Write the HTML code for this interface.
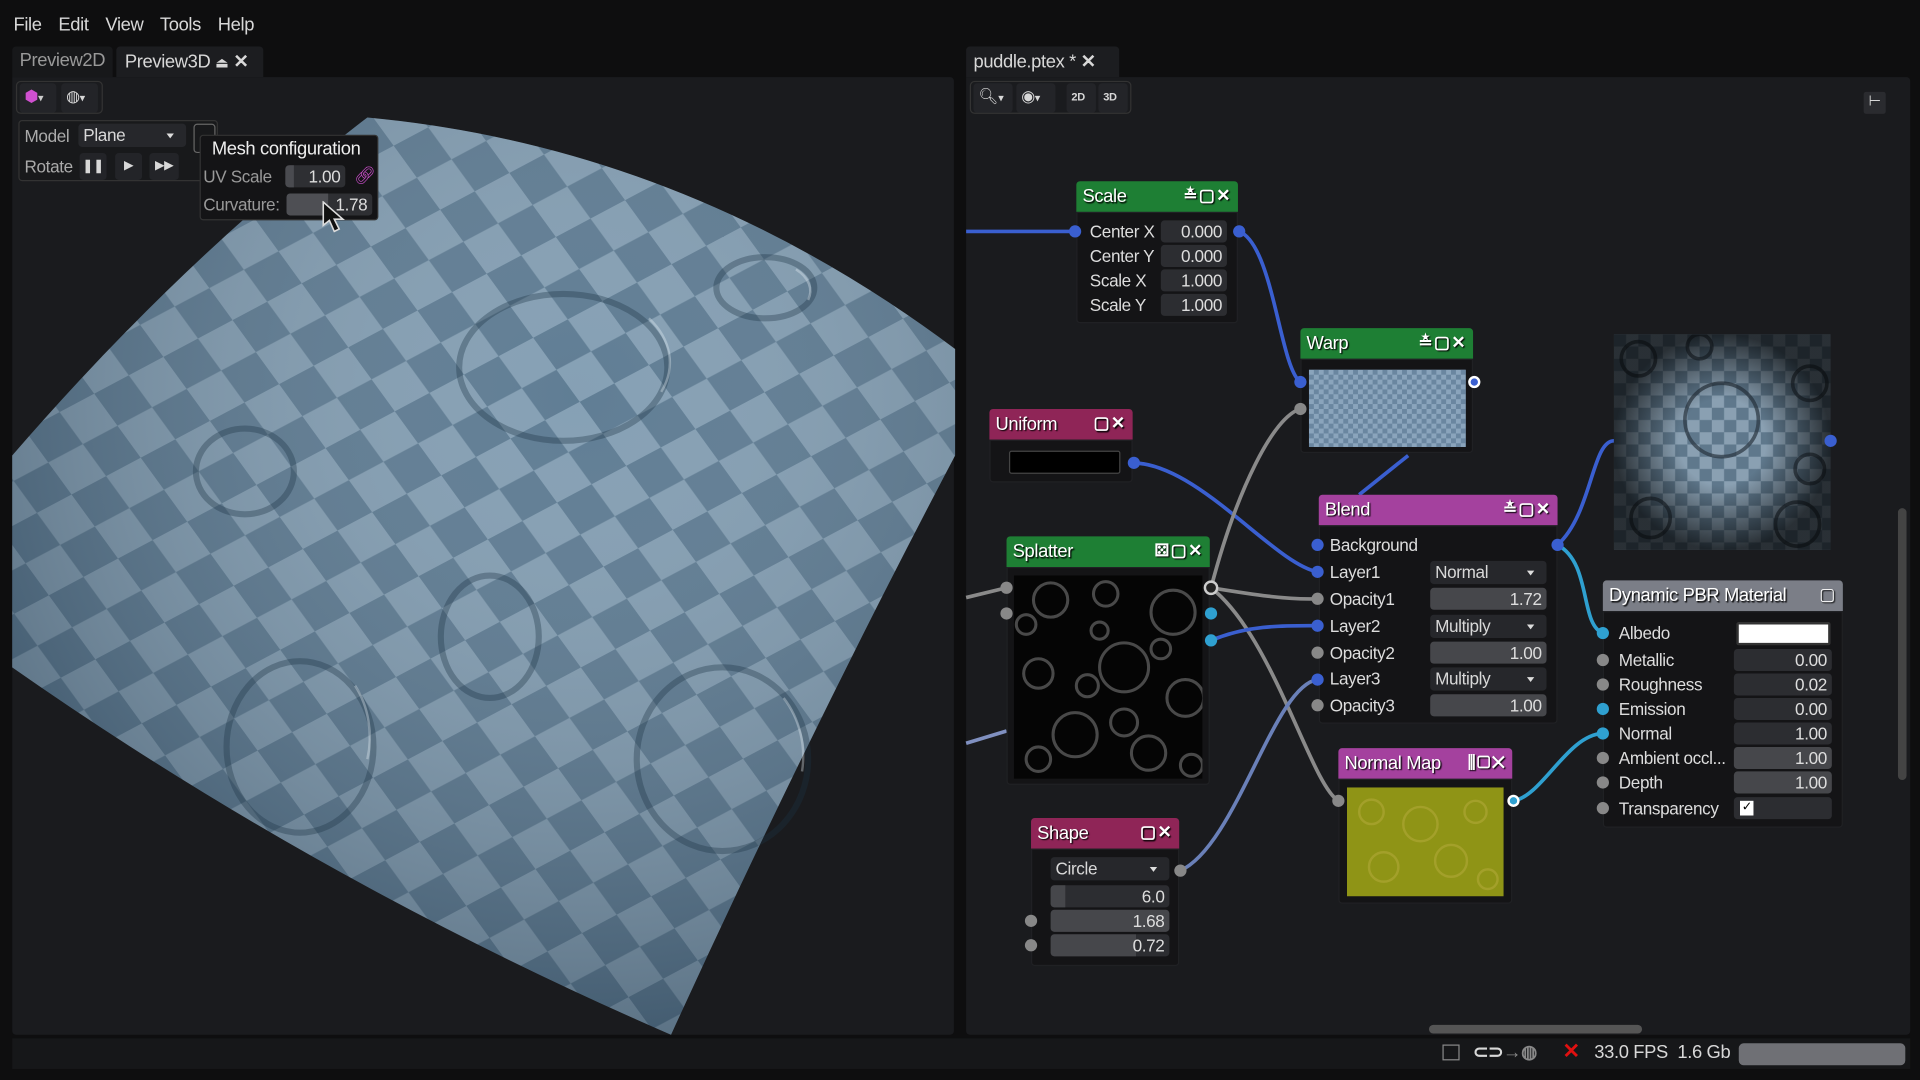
<!DOCTYPE html>
<html><head><meta charset="utf-8"><style>
*{box-sizing:border-box;margin:0;padding:0}
html,body{width:1920px;height:1080px;overflow:hidden;background:#0e0e0f}
#w{position:absolute;left:0;top:0;width:1568px;height:882px;transform:scale(1.22449);transform-origin:0 0;font-family:"Liberation Sans",sans-serif;color:#d8d8d8;font-size:14px;letter-spacing:-0.3px}
.a{position:absolute}
.pan{background:#1a1b1e}
.hd{position:absolute;height:25px;color:#fff;font-size:15px;padding:4px 5px;text-shadow:1px 1px 1px #000;border-radius:3px 3px 0 0}
.bd{position:absolute;background:#141416;border:1px solid #202124;border-radius:0 0 3px 3px}
.ic{position:absolute;right:5px;top:3px;font-size:14px;font-weight:bold;letter-spacing:1px}
.lb{position:absolute;font-size:14px;color:#ddd}
.vb{position:absolute;background:#2c2d31;border-radius:3px;text-align:right;padding-right:4px;font-size:14px;color:#ddd;height:18px;line-height:18px}
.dd{position:absolute;background:#26272b;border-radius:3px;padding-left:4px;font-size:14px;height:19px;line-height:19px}
.dd:after{content:"";position:absolute;right:10px;top:8px;border:3px solid transparent;border-top:4px solid #ddd}
.dt{position:absolute;width:10px;height:10px;border-radius:50%}
.tb{position:absolute;background:#232428;border-radius:3px;height:24px}
</style></head><body><div id="w">
<div class="a" style="left:11px;top:12px;font-size:15px;word-spacing:3px">File&nbsp; Edit&nbsp; View&nbsp; Tools&nbsp; Help</div>
<div class="a" style="left:10px;top:38px;width:82px;height:25px;background:#17181a;border-radius:3px 3px 0 0;color:#999;font-size:15px;padding:3px 6px">Preview2D</div>
<div class="a" style="left:95px;top:38px;width:120px;height:25px;background:#1c1d20;border-radius:3px 3px 0 0;font-size:15px;padding:3px 7px">Preview3D <span style="font-size:12px">⏏</span> <b>✕</b></div>
<div class="a" style="left:789px;top:38px;width:125px;height:25px;background:#1c1d20;border-radius:3px 3px 0 0;font-size:15px;padding:3px 6px">puddle.ptex * <b>✕</b></div>
<div class="a pan" style="left:10px;top:63px;width:769px;height:782px;border-radius:0 3px 3px 3px"></div>
<div class="a pan" style="left:789px;top:63px;width:771px;height:782px;border-radius:0 3px 3px 3px"></div>
<div class="a" style="left:10px;top:848px;width:1550px;height:25px;background:#161719"></div>
<svg class="a" style="left:0;top:0" width="790" height="850">
<defs>
<pattern id="ck" width="64" height="64" patternUnits="userSpaceOnUse" patternTransform="rotate(-28) skewX(8)">
<rect width="64" height="64" fill="#7b98ae"/><rect width="32" height="32" fill="#52728b"/><rect x="32" y="32" width="32" height="32" fill="#52728b"/></pattern>
<radialGradient id="sh" cx="0.6" cy="0.3" r="0.85"><stop offset="0" stop-color="#fff" stop-opacity="0.08"/><stop offset="1" stop-color="#001020" stop-opacity="0.45"/></radialGradient>
</defs>
<path d="M300,96 Q560,120 780,285 L780,372 Q660,600 548,845 Q260,720 10,545 L10,372 Q150,210 300,96Z" fill="url(#ck)"/>
<path d="M300,96 Q560,120 780,285 L780,372 Q660,600 548,845 Q260,720 10,545 L10,372 Q150,210 300,96Z" fill="url(#sh)"/>
<g fill="none" stroke="#1e3344" stroke-opacity="0.35" stroke-width="5">
<ellipse cx="460" cy="300" rx="85" ry="60"/><ellipse cx="625" cy="235" rx="40" ry="25"/><ellipse cx="245" cy="610" rx="60" ry="70"/><ellipse cx="590" cy="620" rx="70" ry="75"/><ellipse cx="200" cy="385" rx="40" ry="35"/><ellipse cx="400" cy="520" rx="40" ry="50"/>
</g>
<g fill="none" stroke="#e8f0f6" stroke-opacity="0.35" stroke-width="2">
<path d="M530,260 A85,60 0 0 1 540,320"/><path d="M650,220 A40,25 0 0 1 660,245"/><path d="M290,560 A60,70 0 0 1 300,620"/><path d="M640,570 A70,75 0 0 1 655,630"/>
</g>
</svg>
<div class="a" style="left:13px;top:66px;width:71px;height:27px;border:1px solid #333;border-radius:4px;background:#1b1c1f"></div>
<div class="tb" style="left:16px;top:68px;width:30px;color:#d050d0;font-size:13px;padding:3px 4px">⬢<span style="color:#ccc;font-size:9px">▾</span></div>
<div class="tb" style="left:50px;top:68px;width:30px;font-size:13px;padding:3px 4px">◍<span style="font-size:9px">▾</span></div>
<div class="a" style="left:15px;top:98px;width:163px;height:50px;border:1px solid #333;border-radius:3px;background:#18191b"></div>
<div class="lb" style="left:20px;top:103px;color:#aaa">Model</div>
<div class="dd" style="left:64px;top:101px;width:88px">Plane</div>
<div class="a" style="left:158px;top:101px;width:18px;height:24px;border:1px solid #666;border-radius:3px"></div>
<div class="lb" style="left:20px;top:128px;color:#aaa">Rotate</div>
<div class="tb" style="left:65px;top:125px;width:22px;height:22px;text-align:center;font-size:11px;line-height:22px">❚❚</div>
<div class="tb" style="left:94px;top:125px;width:22px;height:22px;text-align:center;font-size:10px;line-height:22px">▶</div>
<div class="tb" style="left:122px;top:125px;width:24px;height:22px;text-align:center;font-size:10px;line-height:22px">▶▶</div>
<div class="a" style="left:163px;top:110px;width:146px;height:70px;background:#141416;border:1px solid #333;border-radius:3px"></div>
<div class="lb" style="left:173px;top:113px;font-size:15px;color:#eee">Mesh configuration</div>
<div class="lb" style="left:166px;top:136px;color:#999">UV Scale</div>
<div class="vb" style="left:234px;top:135px;width:48px;background:#2e2f33">1.00</div>
<div class="a" style="left:233px;top:135px;width:7px;height:18px;background:#4a4b50;border-radius:3px 0 0 3px"></div>
<div class="lb" style="left:289px;top:135px;color:#d050d0">🔗︎</div>
<div class="lb" style="left:166px;top:159px;color:#999">Curvature:</div>
<div class="vb" style="left:234px;top:158px;width:70px;background:#2e2f33">1.78</div>
<div class="a" style="left:234px;top:158px;width:34px;height:18px;background:#4e4f54;border-radius:3px 0 0 3px"></div>
<svg class="a" style="left:262px;top:164px" width="22" height="28"><path d="M2,1 L2,20 L7,16 L11,25 L15,23 L11,15 L18,15Z" fill="#111" stroke="#ddd" stroke-width="1.3"/></svg>
<div class="a" style="left:792px;top:66px;width:132px;height:27px;border:1px solid #333;border-radius:4px"></div>
<div class="tb" style="left:795px;top:68px;width:32px;font-size:13px;padding:3px 4px">🔍︎<span style="font-size:9px">▾</span></div>
<div class="tb" style="left:830px;top:68px;width:32px;font-size:13px;padding:3px 4px">◉<span style="font-size:9px">▾</span></div>
<div class="tb" style="left:871px;top:68px;width:24px;font-size:9px;font-weight:bold;padding:6px 4px">2D</div>
<div class="tb" style="left:897px;top:68px;width:24px;font-size:9px;font-weight:bold;padding:6px 4px">3D</div>
<div class="a" style="left:1522px;top:75px;width:18px;height:18px;background:#2a2b2f;border-radius:2px;font-size:12px;text-align:center">⊢</div>
<svg class="a" style="left:0;top:0" width="1568" height="882" fill="none" stroke-width="3">
<path d="M789,189 L878,189" stroke="#3a5fd0"/>
<path d="M1012,189 C1040,200 1045,300 1062,312" stroke="#3a5fd0"/>
<path d="M926,378 C980,380 1040,460 1076,467" stroke="#3a5fd0"/>
<path d="M1150,372 L1110,404" stroke="#3a5fd0"/>
<path d="M1272,445 C1300,420 1300,360 1318,360" stroke="#3a5fd0"/>
<path d="M1272,445 C1300,460 1290,510 1309,517" stroke="#2fa0d0"/>
<path d="M989,480 C1010,400 1040,340 1062,334" stroke="#8a8a8a"/>
<path d="M989,480 C1020,485 1050,490 1076,489" stroke="#8a8a8a"/>
<path d="M989,480 C1040,520 1070,640 1093,654" stroke="#8a8a8a"/>
<path d="M989,523 C1020,510 1050,511 1076,511" stroke="#3a5fd0"/>
<path d="M964,711 C1010,690 1040,560 1076,555" stroke="#6a80b8"/>
<path d="M1236,654 C1260,650 1280,600 1309,599" stroke="#2fa0d0"/>
<path d="M789,488 L822,480" stroke="#8a8a8a"/>
<path d="M789,607 L822,597" stroke="#8090c0"/>
</svg>
<div class="hd" style="left:879px;top:148px;width:132px;background:#1e7f34">Scale<span class="ic">≛▢✕</span></div>
<div class="bd" style="left:879px;top:173px;width:132px;height:91px"></div>
<div class="lb" style="left:890px;top:181px">Center X</div><div class="vb" style="left:948px;top:180px;width:54px">0.000</div>
<div class="lb" style="left:890px;top:201px">Center Y</div><div class="vb" style="left:948px;top:200px;width:54px">0.000</div>
<div class="lb" style="left:890px;top:221px">Scale X</div><div class="vb" style="left:948px;top:220px;width:54px">1.000</div>
<div class="lb" style="left:890px;top:241px">Scale Y</div><div class="vb" style="left:948px;top:240px;width:54px">1.000</div>
<div class="dt" style="left:873px;top:184px;background:#3a5fd0"></div><div class="dt" style="left:1007px;top:184px;background:#3a5fd0"></div>
<div class="hd" style="left:1062px;top:268px;width:141px;background:#1e7f34">Warp<span class="ic">≛▢✕</span></div>
<div class="bd" style="left:1062px;top:293px;width:141px;height:77px"></div>
<div class="a" style="left:1069px;top:302px;width:128px;height:63px;background:#7c98b2;background-image:repeating-conic-gradient(#6a86a0 0 25%,#8aa4bc 0 50%);background-size:8px 8px"></div>
<div class="dt" style="left:1057px;top:307px;background:#3a5fd0"></div><div class="dt" style="left:1057px;top:329px;background:#888"></div><div class="dt" style="left:1199px;top:307px;background:#3a5fd0;border:2px solid #fff"></div>
<div class="hd" style="left:808px;top:334px;width:117px;background:#8f2557">Uniform<span class="ic">▢✕</span></div>
<div class="bd" style="left:808px;top:359px;width:117px;height:35px"></div>
<div class="a" style="left:824px;top:368px;width:91px;height:19px;background:#000;border:1px solid #444;border-radius:2px"></div>
<div class="dt" style="left:921px;top:373px;background:#3a5fd0"></div>
<div class="hd" style="left:1077px;top:404px;width:195px;background:#a4419e">Blend<span class="ic">≛▢✕</span></div>
<div class="bd" style="left:1077px;top:429px;width:195px;height:162px"></div>
<div class="lb" style="left:1086px;top:437px">Background</div>
<div class="lb" style="left:1086px;top:459px">Layer1</div><div class="dd" style="left:1168px;top:458px;width:95px">Normal</div>
<div class="lb" style="left:1086px;top:481px">Opacity1</div><div class="vb" style="left:1168px;top:480px;width:95px;background:#46474b">1.72</div>
<div class="lb" style="left:1086px;top:503px">Layer2</div><div class="dd" style="left:1168px;top:502px;width:95px">Multiply</div>
<div class="lb" style="left:1086px;top:525px">Opacity2</div><div class="vb" style="left:1168px;top:524px;width:95px;background:#46474b">1.00</div>
<div class="lb" style="left:1086px;top:546px">Layer3</div><div class="dd" style="left:1168px;top:545px;width:95px">Multiply</div>
<div class="lb" style="left:1086px;top:568px">Opacity3</div><div class="vb" style="left:1168px;top:567px;width:95px;background:#46474b">1.00</div>
<div class="dt" style="left:1071px;top:440px;background:#3a5fd0"></div><div class="dt" style="left:1071px;top:462px;background:#3a5fd0"></div><div class="dt" style="left:1071px;top:484px;background:#888"></div><div class="dt" style="left:1071px;top:506px;background:#3a5fd0"></div><div class="dt" style="left:1071px;top:528px;background:#888"></div><div class="dt" style="left:1071px;top:550px;background:#3a5fd0"></div><div class="dt" style="left:1071px;top:571px;background:#888"></div><div class="dt" style="left:1267px;top:440px;background:#3a5fd0"></div>
<div class="hd" style="left:822px;top:438px;width:166px;background:#1e7f34">Splatter<span class="ic">⚄▢✕</span></div>
<div class="bd" style="left:822px;top:463px;width:166px;height:178px"></div>
<svg class="a" style="left:828px;top:470px" width="154" height="166"><rect width="154" height="166" fill="#050505"/><g fill="none" stroke="#666" stroke-width="2.5" stroke-opacity="0.7"><circle cx="30" cy="20" r="14"/><circle cx="75" cy="15" r="10"/><circle cx="130" cy="30" r="18"/><circle cx="20" cy="80" r="12"/><circle cx="90" cy="75" r="20"/><circle cx="140" cy="100" r="15"/><circle cx="50" cy="130" r="18"/><circle cx="110" cy="145" r="14"/><circle cx="70" cy="45" r="7"/><circle cx="20" cy="150" r="10"/><circle cx="60" cy="90" r="9"/><circle cx="120" cy="60" r="8"/><circle cx="90" cy="120" r="11"/><circle cx="145" cy="155" r="9"/><circle cx="10" cy="40" r="8"/></g></svg>
<div class="dt" style="left:817px;top:475px;background:#888"></div><div class="dt" style="left:817px;top:496px;background:#888"></div>
<div class="dt" style="left:983px;top:474px;background:#222;border:2px solid #ccc;width:12px;height:12px"></div><div class="dt" style="left:984px;top:496px;background:#2fa0d0"></div><div class="dt" style="left:984px;top:518px;background:#2fa0d0"></div>
<div class="hd" style="left:842px;top:668px;width:121px;background:#8f2557">Shape<span class="ic">▢✕</span></div>
<div class="bd" style="left:842px;top:693px;width:121px;height:96px"></div>
<div class="dd" style="left:858px;top:700px;width:97px">Circle</div>
<div class="vb" style="left:858px;top:723px;width:97px">6.0</div><div class="a" style="left:858px;top:723px;width:12px;height:18px;background:#46474b;border-radius:3px 0 0 3px"></div>
<div class="vb" style="left:858px;top:743px;width:97px;background:#46474b">1.68</div>
<div class="vb" style="left:858px;top:763px;width:97px;background:linear-gradient(90deg,#46474b 72%,#2c2d31 72%)">0.72</div>
<div class="dt" style="left:959px;top:706px;background:#888"></div><div class="dt" style="left:837px;top:747px;background:#888"></div><div class="dt" style="left:837px;top:767px;background:#888"></div>
<div class="hd" style="left:1093px;top:611px;width:142px;background:#a4419e">Normal Map<span class="ic">⫼▢✕</span></div>
<div class="bd" style="left:1093px;top:636px;width:142px;height:102px"></div>
<svg class="a" style="left:1100px;top:643px" width="128" height="89"><rect width="128" height="89" fill="#8f9416"/><g fill="none" stroke="#b0a838" stroke-width="2" stroke-opacity="0.6"><circle cx="20" cy="20" r="10"/><circle cx="60" cy="30" r="14"/><circle cx="105" cy="20" r="9"/><circle cx="30" cy="65" r="12"/><circle cx="85" cy="60" r="13"/><circle cx="115" cy="75" r="8"/></g></svg>
<div class="dt" style="left:1088px;top:649px;background:#888"></div><div class="dt" style="left:1231px;top:649px;background:#2fa0d0;border:2px solid #fff"></div>
<svg class="a" style="left:1318px;top:273px" width="177" height="176"><defs><pattern id="c2" width="20" height="20" patternUnits="userSpaceOnUse"><rect width="20" height="20" fill="#8aa0b2"/><rect width="10" height="10" fill="#5f788c"/><rect x="10" y="10" width="10" height="10" fill="#5f788c"/></pattern><radialGradient id="v"><stop offset="0.4" stop-color="#000" stop-opacity="0"/><stop offset="1" stop-color="#000" stop-opacity="0.7"/></radialGradient></defs><rect width="177" height="176" fill="url(#c2)"/><g fill="none" stroke="#2a3440" stroke-width="3" stroke-opacity="0.7"><circle cx="88" cy="70" r="30"/><circle cx="20" cy="20" r="14"/><circle cx="160" cy="40" r="14"/><circle cx="30" cy="150" r="16"/><circle cx="150" cy="155" r="18"/><circle cx="160" cy="110" r="12"/><circle cx="70" cy="10" r="10"/></g><rect width="177" height="176" fill="url(#v)"/></svg>
<div class="dt" style="left:1490px;top:355px;background:#3a5fd0"></div>
<div class="hd" style="left:1309px;top:474px;width:196px;background:#7b7e87">Dynamic PBR Material<span class="ic" style="font-weight:normal">▢</span></div>
<div class="bd" style="left:1309px;top:499px;width:196px;height:177px"></div>
<div class="lb" style="left:1322px;top:509px">Albedo</div><div class="a" style="left:1418px;top:508px;width:77px;height:19px;background:#fff;border:2px solid #333;border-radius:2px"></div>
<div class="lb" style="left:1322px;top:531px">Metallic</div><div class="vb" style="left:1416px;top:530px;width:80px">0.00</div>
<div class="lb" style="left:1322px;top:551px">Roughness</div><div class="vb" style="left:1416px;top:550px;width:80px">0.02</div>
<div class="lb" style="left:1322px;top:571px">Emission</div><div class="vb" style="left:1416px;top:570px;width:80px">0.00</div>
<div class="lb" style="left:1322px;top:591px">Normal</div><div class="vb" style="left:1416px;top:590px;width:80px">1.00</div>
<div class="lb" style="left:1322px;top:611px">Ambient occl...</div><div class="vb" style="left:1416px;top:610px;width:80px;background:#46474b">1.00</div>
<div class="lb" style="left:1322px;top:631px">Depth</div><div class="vb" style="left:1416px;top:630px;width:80px;background:#46474b">1.00</div>
<div class="lb" style="left:1322px;top:652px">Transparency</div><div class="vb" style="left:1416px;top:651px;width:80px"></div><div class="a" style="left:1421px;top:654px;width:11px;height:12px;background:#fff;color:#000;font-size:10px;line-height:12px;text-align:center">✓</div>
<div class="dt" style="left:1304px;top:512px;background:#2fa0d0"></div><div class="dt" style="left:1304px;top:534px;background:#888"></div><div class="dt" style="left:1304px;top:554px;background:#888"></div><div class="dt" style="left:1304px;top:574px;background:#2fa0d0"></div><div class="dt" style="left:1304px;top:594px;background:#2fa0d0"></div><div class="dt" style="left:1304px;top:614px;background:#888"></div><div class="dt" style="left:1304px;top:634px;background:#888"></div><div class="dt" style="left:1304px;top:655px;background:#888"></div>
<div class="a" style="left:1167px;top:837px;width:174px;height:7px;background:#555;border-radius:4px"></div>
<div class="a" style="left:1550px;top:415px;width:7px;height:222px;background:#444;border-radius:4px"></div>
<div class="a" style="left:1178px;top:853px;width:14px;height:13px;border:1px solid #888"></div>
<div class="a" style="left:1203px;top:850px;font-size:15px;font-weight:bold">⊂⊃<span style="color:#888">→◍</span></div>
<div class="a" style="left:1276px;top:849px;color:#e01010;font-size:17px;font-weight:bold">✕</div>
<div class="a" style="left:1302px;top:851px;font-size:15px">33.0 FPS&nbsp; 1.6 Gb</div>
<div class="a" style="left:1420px;top:852px;width:136px;height:18px;background:#6f7075;border-radius:4px"></div>
</div></body></html>
